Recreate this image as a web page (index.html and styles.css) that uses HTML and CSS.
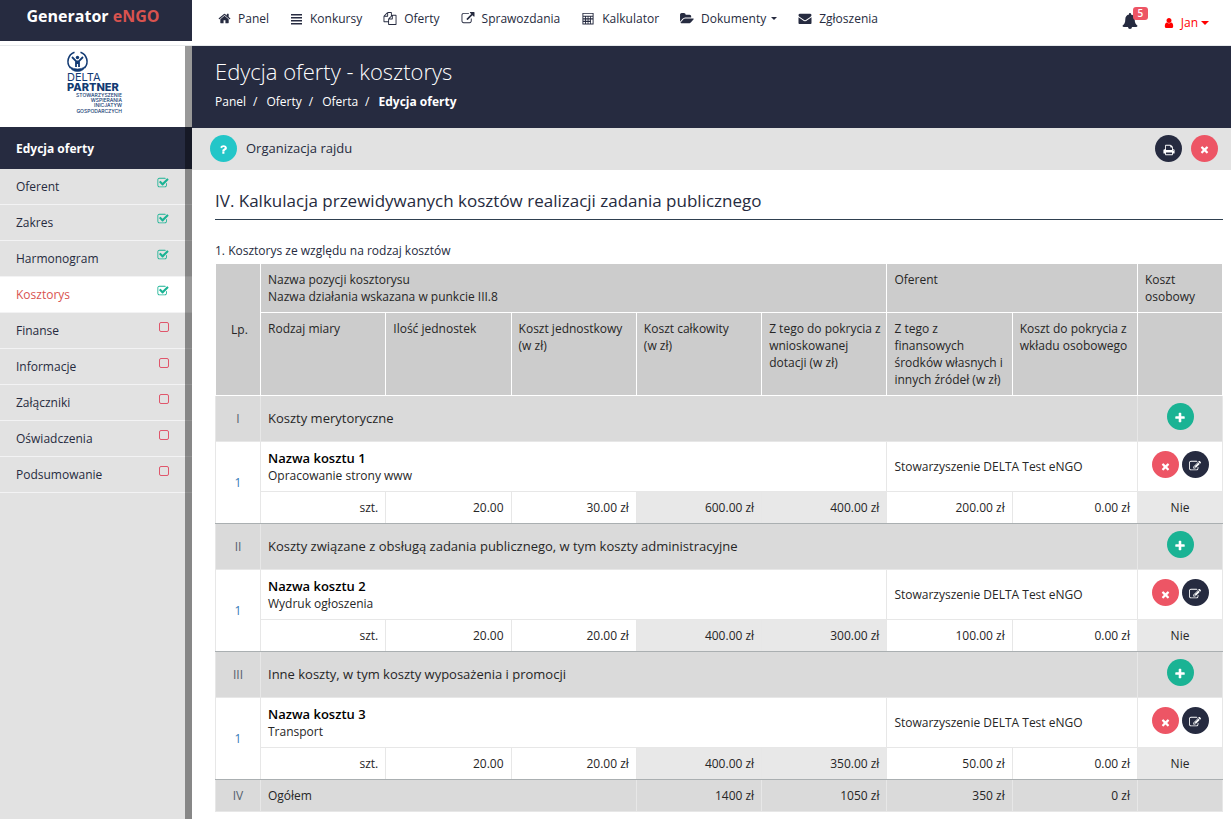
FILE: index.html
```html
<!DOCTYPE html>
<html lang="pl">
<head>
  <meta charset="UTF-8">
  <meta name="viewport" content="width=device-width, initial-scale=1.0">
  <title>Generator eNGO - Edycja oferty</title>
  <link rel="stylesheet" href="styles.css">
</head>
<body>
  <!-- icon set -->
  <svg class="sprite" aria-hidden="true">
    <symbol id="i-home" viewBox="0 0 1792 1792"><path d="M1472 992v480q0 26-19 45t-45 19h-384v-384h-256v384h-384q-26 0-45-19t-19-45v-480q0-1 .5-3t.5-3l575-474 575 474q1 2 1 6zm223-69l-62 74q-8 9-21 11h-3q-13 0-21-7l-692-577-692 577q-12 8-24 7-13-2-21-11l-62-74q-8-10-7-23.5t11-21.5l719-599q32-26 76-26t76 26l244 204v-195q0-14 9-23t23-9h192q14 0 23 9t9 23v408l219 182q10 8 11 21.5t-7 23.5z"/></symbol>
    <symbol id="i-list" viewBox="0 0 13 13"><path d="M1 2h11v1.500H1zM1 5h11v1.500H1zM1 8h11v1.500H1zM1 11h11v1.500H1z"/></symbol>
    <symbol id="i-files" viewBox="0 0 1792 1792"><path d="M1696 384q40 0 68 28t28 68v1216q0 40-28 68t-68 28h-960q-40 0-68-28t-28-68v-288h-544q-40 0-68-28t-28-68v-672q0-40 20-88t48-76l408-408q28-28 76-48t88-20h416q40 0 68 28t28 68v328q68-40 128-40h416zm-544 213l-299 299h299v-299zm-640-384l-299 299h299v-299zm196 647l316-316v-416h-384v416q0 40-28 68t-68 28h-416v640h512v-256q0-40 20-88t48-76zm956 804v-1152h-384v416q0 40-28 68t-68 28h-416v640h896z"/></symbol>
    <symbol id="i-external" viewBox="0 0 1792 1792"><path d="M1408 928v320q0 119-84.500 203.500t-203.500 84.500h-832q-119 0-203.500-84.500t-84.500-203.500v-832q0-119 84.500-203.500t203.500-84.500h704q14 0 23 9t9 23v64q0 14-9 23t-23 9h-704q-66 0-113 47t-47 113v832q0 66 47 113t113 47h832q66 0 113-47t47-113v-320q0-14 9-23t23-9h64q14 0 23 9t9 23zm384-864v512q0 26-19 45t-45 19-45-19l-176-176-652 652q-10 10-23 10t-23-10l-114-114q-10-10-10-23t10-23l652-652-176-176q-19-19-19-45t19-45 45-19h512q26 0 45 19t19 45z"/></symbol>
    <symbol id="i-calc" viewBox="0 0 14 14"><path fill-rule="evenodd" d="M1 1h12v12.500H1zM2 2v2h10V2zM2 5.200v1.500h1.800V5.200zM4.800 5.200v1.500h1.800V5.200zM7.500 5.200v1.500h1.800V5.200zM10.200 5.200v1.500H12V5.200zM2 8v1.500h1.800V8zM4.800 8v1.500h1.800V8zM7.500 8v1.500h1.800V8zM10.200 8v4.500H12V8zM2 10.800v1.600h1.800v-1.600zM4.800 10.800v1.600h1.800v-1.600zM7.500 10.800v1.600h1.800v-1.600z"/></symbol>
    <symbol id="i-folder" viewBox="0 0 1920 1792"><path d="M1879 952q0 31-31 66l-336 396q-43 51-120.500 86.500t-143.500 35.500h-1088q-34 0-60.500-13t-26.500-43q0-31 31-66l336-396q43-51 120.500-86.500t143.500-35.500h1088q34 0 60.500 13t26.500 43zm-343-344v160h-832q-94 0-197 47.500t-164 119.500l-337 396-5 6q0-4-.5-12.500t-.5-12.500v-960q0-92 66-158t158-66h320q92 0 158 66t66 158v32h544q92 0 158 66t66 158z"/></symbol>
    <symbol id="i-mail" viewBox="0 0 1792 1792"><path d="M1792 710v794q0 66-47 113t-113 47h-1472q-66 0-113-47t-47-113v-794q44 49 101 87 362 246 497 345 57 42 92.500 65.500t94.500 48 110 24.500h2q51 0 110-24.500t94.500-48 92.500-65.500q170-123 498-345 57-39 100-87zm0-294q0 79-49 151t-122 123q-376 261-468 325-10 7-42.500 31t-54 38.500-52 32.500-57.500 27-50 9h-2q-23 0-50-9t-57.500-27-52-32.500-54-38.500-42.500-31q-91-64-262-182.500t-205-142.500q-62-42-117-115.500t-55-136.500q0-78 41.500-130t118.500-52h1472q65 0 112.500 47t47.500 113z"/></symbol>
    <symbol id="i-bell" viewBox="0 0 16 16"><path d="M8 0c.6 0 1 .4 1 1v.6c2.400.5 3.700 2.300 3.700 4.700 0 3.500.9 5 2.800 6.500 0 .7-.5 1.200-1.200 1.200H10a2 2 0 0 1-4 0H1.700C1 14 .5 13.500.5 12.800 2.400 11.300 3.300 9.800 3.300 6.300 3.300 3.900 4.600 2.100 7 1.600V1c0-.6.4-1 1-1z"/></symbol>
    <symbol id="i-user" viewBox="192 128 1408 1536"><path d="M1536 1399q0 109-62.500 187t-150.500 78h-854q-88 0-150.500-78t-62.500-187q0-85 8.500-160.500t31.500-152 58.500-131 94-89 134.500-34.500q131 128 313 128t313-128q76 0 134.500 34.500t94 89 58.500 131 31.500 152 8.500 160.500zm-256-887q0 159-112.500 271.500t-271.500 112.500-271.500-112.500-112.500-271.500 112.500-271.500 271.500-112.500 271.500 112.500 112.500 271.500z"/></symbol>
    <symbol id="i-question" viewBox="0 0 12 12"><path d="M4.700 8.300h2.300v2.300H4.700zM2.400 3.600C3.100 2.200 4.300 1.400 6 1.400c2 0 3.700 1.300 3.700 3 0 1.300-.7 1.900-1.700 2.500-.6.400-.9.600-.9.900H4.700c0-1.400.6-1.900 1.700-2.500.7-.4 1-.6 1-1.100s-.6-.9-1.300-.9c-.8 0-1.200.4-1.900 1.300z"/></symbol>
    <symbol id="i-print" viewBox="0 0 1792 1792"><path d="M448 1536h896v-256h-896v256zm0-640h896v-384h-160q-40 0-68-28t-28-68v-160h-640v640zm1152 64q0-26-19-45t-45-19-45 19-19 45 19 45 45 19 45-19 19-45zm128 0v416q0 13-9.500 22.500t-22.500 9.500h-224v160q0 40-28 68t-68 28h-960q-40 0-68-28t-28-68v-160h-224q-13 0-22.500-9.500t-9.500-22.500v-416q0-79 56.500-135.500t135.500-56.500h64v-544q0-40 28-68t68-28h672q40 0 88 20t76 48l152 152q28 28 48 76t20 88v256h64q79 0 135.500 56.500t56.500 135.500z"/></symbol>
    <symbol id="i-times" viewBox="0 0 1792 1792"><path d="M1490 1322q0 40-28 68l-136 136q-28 28-68 28t-68-28l-294-294-294 294q-28 28-68 28t-68-28l-136-136q-28-28-28-68t28-68l294-294-294-294q-28-28-28-68t28-68l136-136q28-28 68-28t68 28l294 294 294-294q28-28 68-28t68 28l136 136q28 28 28 68t-28 68l-294 294 294 294q28 28 28 68z"/></symbol>
    <symbol id="i-plus" viewBox="0 0 1792 1792"><path d="M1600 736v192q0 40-28 68t-68 28h-416v416q0 40-28 68t-68 28h-192q-40 0-68-28t-28-68v-416h-416q-40 0-68-28t-28-68v-192q0-40 28-68t68-28h416v-416q0-40 28-68t68-28h192q40 0 68 28t28 68v416h416q40 0 68 28t28 68z"/></symbol>
    <symbol id="i-edit" viewBox="0 0 1792 1792"><path d="M888 1184l116-116-152-152-116 116v56h96v96h56zm440-720q-16-16-33 1l-350 350q-17 17-1 33t33-1l350-350q17-17 1-33zm80 594v190q0 119-84.500 203.500t-203.500 84.500h-832q-119 0-203.500-84.500t-84.500-203.500v-832q0-119 84.500-203.500t203.500-84.500h832q63 0 117 25 15 7 18 23 3 17-9 29l-49 49q-14 14-32 8-23-6-45-6h-832q-66 0-113 47t-47 113v832q0 66 47 113t113 47h832q66 0 113-47t47-113v-126q0-13 9-22l64-64q15-15 35-7t20 29zm-96-738l288 288-672 672h-288v-288zm444 132l-92 92-288-288 92-92q28-28 68-28t68 28l152 152q28 28 28 68t-28 68z"/></symbol>
    <symbol id="i-done" viewBox="0 0 1792 1792"><path d="M1472 930v318q0 119-84.500 203.500t-203.500 84.500h-832q-119 0-203.500-84.500t-84.500-203.500v-832q0-119 84.500-203.500t203.500-84.500h832q63 0 117 25 15 7 18 23 3 17-9 29l-49 49q-10 10-23 10-3 0-9-2-23-6-45-6h-832q-66 0-113 47t-47 113v832q0 66 47 113t113 47h832q66 0 113-47t47-113v-254q0-13 9-22l64-64q10-10 23-10 6 0 12 3 20 8 20 29zm231-489l-814 814q-24 24-57 24t-57-24l-430-430q-24-24-24-57t24-57l110-110q24-24 57-24t57 24l263 263 647-647q24-24 57-24t57 24l110 110q24 24 24 57t-24 57z"/></symbol>
    <symbol id="i-todo" viewBox="0 0 12 12"><rect x="2.500" y="1.500" width="9" height="9" rx="1.500" fill="none" stroke="currentColor"/></symbol>
    <symbol id="i-caret" viewBox="0 0 8 4"><path d="M0 0h8L4 4z"/></symbol>
  </svg>

  <header class="top">
    <a href="#" class="brand">Generator <span>eNGO</span></a>
    <nav class="menu">
      <a href="#"><svg><use href="#i-home"/></svg>Panel</a>
      <a href="#"><svg><use href="#i-list"/></svg>Konkursy</a>
      <a href="#"><svg class="wide"><use href="#i-files"/></svg>Oferty</a>
      <a href="#"><svg class="wide"><use href="#i-external"/></svg>Sprawozdania</a>
      <a href="#"><svg class="wide"><use href="#i-calc"/></svg>Kalkulator</a>
      <a href="#"><svg class="wide"><use href="#i-folder"/></svg>Dokumenty<svg class="caret"><use href="#i-caret"/></svg></a>
      <a href="#"><svg class="wide"><use href="#i-mail"/></svg>Zgłoszenia</a>
    </nav>
    <div class="account">
      <a href="#" class="bell" aria-label="Powiadomienia"><svg><use href="#i-bell"/></svg><span class="badge">5</span></a>
      <a href="#" class="user"><svg><use href="#i-user"/></svg>Jan<svg class="caret"><use href="#i-caret"/></svg></a>
    </div>
  </header>

  <div class="page">
    <aside class="sidebar">
      <div class="org">
        <svg class="org-logo" viewBox="0 0 76 74" role="img" aria-label="Delta Partner">
          <g fill="none" stroke="#123a73">
            <path d="M17.500 6.200A9.800 9.800 0 0 0 13.500 22M23.500 6.200A9.800 9.800 0 0 1 27.500 22" stroke-width="1.600"/>
            <path d="M12.500 20.500q8 5 16 0-2.500 5-8 5t-8-5z" fill="#123a73" stroke-width=".6"/>
            <path d="M15 11l4 4v6M26 11l-4 4v6M19 15.500h3M20.500 15v3" stroke-width="1.800"/>
          </g>
          <circle cx="20.500" cy="11.500" r="1.700" fill="#123a73"/>
          <text class="logo-name"><tspan x="10" y="35">DELTA</tspan><tspan x="10" y="45" class="logo-bold">PARTNER</tspan></text>
          <text class="logo-small"><tspan x="65" y="51">STOWARZYSZENIE</tspan><tspan x="65" y="56">WSPIERANIA</tspan><tspan x="65" y="61">INICJATYW</tspan><tspan x="65" y="67">GOSPODARCZYCH</tspan></text>
        </svg>
      </div>
      <h2 class="side-title">Edycja oferty</h2>
      <nav class="steps">
        <a href="#">Oferent<svg class="done"><use href="#i-done"/></svg></a>
        <a href="#">Zakres<svg class="done"><use href="#i-done"/></svg></a>
        <a href="#">Harmonogram<svg class="done"><use href="#i-done"/></svg></a>
        <a href="#" class="active">Kosztorys<svg class="done"><use href="#i-done"/></svg></a>
        <a href="#">Finanse<svg class="todo"><use href="#i-todo"/></svg></a>
        <a href="#">Informacje<svg class="todo"><use href="#i-todo"/></svg></a>
        <a href="#">Załączniki<svg class="todo"><use href="#i-todo"/></svg></a>
        <a href="#">Oświadczenia<svg class="todo"><use href="#i-todo"/></svg></a>
        <a href="#">Podsumowanie<svg class="todo"><use href="#i-todo"/></svg></a>
      </nav>
    </aside>

    <main class="main">
      <div class="heading">
        <h1>Edycja oferty - kosztorys</h1>
        <ol class="breadcrumb">
          <li><a href="#">Panel</a></li>
          <li><a href="#">Oferty</a></li>
          <li><a href="#">Oferta</a></li>
          <li><strong>Edycja oferty</strong></li>
        </ol>
      </div>

      <div class="toolbar">
        <button class="circle info" aria-label="Pomoc"><svg><use href="#i-question"/></svg></button>
        <span class="offer-name">Organizacja rajdu</span>
        <button class="circle dark" aria-label="Drukuj"><svg><use href="#i-print"/></svg></button>
        <button class="circle danger" aria-label="Zamknij"><svg><use href="#i-times"/></svg></button>
      </div>

      <section class="content">
        <h2>IV. Kalkulacja przewidywanych kosztów realizacji zadania publicznego</h2>
        <table class="costs">
          <caption>1. Kosztorys ze względu na rodzaj kosztów</caption>
          <colgroup>
            <col class="col-no"><col span="7"><col class="col-act">
          </colgroup>
          <thead>
            <tr>
              <th rowspan="2" class="no">Lp.</th>
              <th colspan="5">Nazwa pozycji kosztorysu<br>Nazwa działania wskazana w punkcie III.8</th>
              <th colspan="2">Oferent</th>
              <th>Koszt osobowy</th>
            </tr>
            <tr>
              <th>Rodzaj miary</th>
              <th>Ilość jednostek</th>
              <th>Koszt jednostkowy (w&nbsp;zł)</th>
              <th>Koszt całkowity (w&nbsp;zł)</th>
              <th>Z tego do pokrycia z wnioskowanej dotacji (w&nbsp;zł)</th>
              <th>Z tego z<br>finansowych środków własnych i innych źródeł (w&nbsp;zł)</th>
              <th>Koszt do pokrycia z wkładu osobowego</th>
              <th></th>
            </tr>
          </thead>
          <tbody>
            <tr class="group">
              <td class="no">I</td>
              <td colspan="7">Koszty merytoryczne</td>
              <td><div class="actions"><button class="circle add" aria-label="Dodaj"><svg><use href="#i-plus"/></svg></button></div></td>
            </tr>
            <tr class="item">
              <td rowspan="2" class="no last"><a href="#">1</a></td>
              <td colspan="5"><strong>Nazwa kosztu 1</strong>Opracowanie strony www</td>
              <td colspan="2">Stowarzyszenie DELTA Test eNGO</td>
              <td><div class="actions"><button class="circle danger" aria-label="Usuń"><svg><use href="#i-times"/></svg></button><button class="circle dark" aria-label="Edytuj"><svg><use href="#i-edit"/></svg></button></div></td>
            </tr>
            <tr class="values">
              <td>szt.</td><td>20.00</td><td>30.00 zł</td><td class="calc">600.00 zł</td><td class="calc">400.00 zł</td><td>200.00 zł</td><td>0.00 zł</td><td class="calc personal">Nie</td>
            </tr>
            <tr class="group">
              <td class="no">II</td>
              <td colspan="7">Koszty związane z obsługą zadania publicznego, w tym koszty administracyjne</td>
              <td><div class="actions"><button class="circle add" aria-label="Dodaj"><svg><use href="#i-plus"/></svg></button></div></td>
            </tr>
            <tr class="item">
              <td rowspan="2" class="no last"><a href="#">1</a></td>
              <td colspan="5"><strong>Nazwa kosztu 2</strong>Wydruk ogłoszenia</td>
              <td colspan="2">Stowarzyszenie DELTA Test eNGO</td>
              <td><div class="actions"><button class="circle danger" aria-label="Usuń"><svg><use href="#i-times"/></svg></button><button class="circle dark" aria-label="Edytuj"><svg><use href="#i-edit"/></svg></button></div></td>
            </tr>
            <tr class="values">
              <td>szt.</td><td>20.00</td><td>20.00 zł</td><td class="calc">400.00 zł</td><td class="calc">300.00 zł</td><td>100.00 zł</td><td>0.00 zł</td><td class="calc personal">Nie</td>
            </tr>
            <tr class="group">
              <td class="no">III</td>
              <td colspan="7">Inne koszty, w tym koszty wyposażenia i promocji</td>
              <td><div class="actions"><button class="circle add" aria-label="Dodaj"><svg><use href="#i-plus"/></svg></button></div></td>
            </tr>
            <tr class="item">
              <td rowspan="2" class="no last"><a href="#">1</a></td>
              <td colspan="5"><strong>Nazwa kosztu 3</strong>Transport</td>
              <td colspan="2">Stowarzyszenie DELTA Test eNGO</td>
              <td><div class="actions"><button class="circle danger" aria-label="Usuń"><svg><use href="#i-times"/></svg></button><button class="circle dark" aria-label="Edytuj"><svg><use href="#i-edit"/></svg></button></div></td>
            </tr>
            <tr class="values">
              <td>szt.</td><td>20.00</td><td>20.00 zł</td><td class="calc">400.00 zł</td><td class="calc">350.00 zł</td><td>50.00 zł</td><td>0.00 zł</td><td class="calc personal">Nie</td>
            </tr>
          </tbody>
          <tfoot>
            <tr class="total">
              <td class="no">IV</td>
              <td colspan="3" class="label">Ogółem</td>
              <td>1400 zł</td><td>1050 zł</td><td>350 zł</td><td>0 zł</td><td></td>
            </tr>
          </tfoot>
        </table>
      </section>
    </main>
  </div>
</body>
</html>
```
FILE: styles.css
```css
* { box-sizing: border-box; }
body {
  margin: 0;
  min-height: 100vh;
  display: flex;
  flex-direction: column;
  background: #fff;
  color: #262b40;
  font-family: "Open Sans", "Noto Sans", sans-serif;
  font-size: 12px;
  line-height: 17px;
}
a { color: inherit; text-decoration: none; }
svg { fill: currentColor; flex: none; }
.sprite { position: absolute; width: 0; height: 0; }

/* top bar */
.top {
  display: flex;
  align-items: flex-start;
  height: 46px;
  border-bottom: 1px solid #e7eaec;
}
.brand {
  width: 192px;
  height: 41px;
  padding: 4px 6px 0 0;
  background: #262b40;
  color: #fff;
  font-size: 16px;
  font-weight: 700;
  line-height: 24px;
  text-align: center;
}
.brand span { color: #d9534f; }
.menu {
  display: flex;
  flex: 1;
  gap: 21px;
  padding: 10px 0 0 26px;
  font-weight: 500;
}
.menu a, .user {
  display: flex;
  align-items: center;
  white-space: nowrap;
}
.menu svg {
  width: 13px;
  height: 13px;
  margin-right: 7px;
}
.menu .wide { width: 14px; }
.menu .caret {
  width: 6px;
  height: 3px;
  margin: 0 0 0 5px;
}
.account {
  display: flex;
  gap: 26px;
  padding: 13px 22px 0 0;
}
.bell { position: relative; }
.bell svg { display: block; width: 16px; height: 16px; }
.badge {
  position: absolute;
  top: -6px;
  right: -10px;
  width: 15px;
  border-radius: 3px;
  background: #ed5565;
  color: #fff;
  font-size: 10px;
  font-weight: 600;
  line-height: 13px;
  text-align: center;
}
.user { color: #f00; height: 19px; }
.user svg { width: 10px; height: 10px; margin-right: 7px; }
.user .caret { width: 8px; height: 4px; margin: 0 0 0 3px; }

.page { display: flex; flex: 1; }

/* sidebar */
.sidebar {
  position: relative;
  flex: none;
  width: 192px;
  background: #e2e2e2;
}
.sidebar::after {
  content: "";
  position: absolute;
  top: 0;
  right: 0;
  bottom: 0;
  width: 7px;
  background: rgba(0, 0, 0, 0.4);
}
.org { height: 81px; padding-left: 57px; background: #fff; }
.org-logo { display: block; width: 76px; height: 74px; fill: #123a73; }
.logo-name { font: 400 11px Inter, sans-serif; }
.logo-bold { font-weight: 800; }
.logo-small { font: 500 5px Inter, sans-serif; text-anchor: end; }
.side-title {
  margin: 0;
  padding: 1px 16px 0;
  background: #262b40;
  color: #fff;
  font-size: 12px;
  font-weight: 700;
  line-height: 41px;
}
.steps a {
  display: flex;
  justify-content: space-between;
  align-items: center;
  height: 36px;
  padding: 0 23px 0 16px;
  border-bottom: 1px solid #f3f3f4;
  font-weight: 500;
}
.steps svg { width: 12px; height: 12px; margin-bottom: 7px; }
.steps .active { background: #fff; color: #d9534f; }
.done, .steps .active .done { color: #1ab394; }
.todo { color: #e0566b; }

/* page heading */
.main { flex: 1; min-width: 0; }
.heading {
  height: 82px;
  padding: 12px 23px 0;
  background: #262b40;
  color: #fff;
}
.heading h1 {
  margin: 0 0 8px;
  font-size: 22px;
  font-weight: 300;
  line-height: 27px;
}
.breadcrumb {
  display: flex;
  margin: 0;
  padding: 0;
  list-style: none;
  font-weight: 500;
}
.breadcrumb li + li::before { content: "/"; padding: 0 9px 0 7px; }

.toolbar {
  display: flex;
  align-items: center;
  gap: 9px;
  height: 42px;
  padding: 0 13px 2px 18px;
  background: #e2e2e2;
}
.offer-name { flex: 1; font-size: 13px; }
.circle {
  display: flex;
  align-items: center;
  justify-content: center;
  width: 27px;
  height: 27px;
  padding: 3px 0 0;
  border: 0;
  border-radius: 50%;
  color: #fff;
  cursor: pointer;
}
.circle svg { width: 12px; height: 12px; }
.info svg, .danger svg { width: 11px; height: 11px; }
.info { background: #23c6c8; }
.dark { background: #262b40; }
.danger { background: #ed5565; }
.add { background: #1ab394; }

/* cost table */
.content { padding: 20px 8px 8px 23px; }
.content h2 {
  margin: 0 0 22px;
  padding-bottom: 7px;
  border-bottom: 1px solid #2f4050;
  font-size: 17px;
  font-weight: 400;
  line-height: 22px;
}
.costs {
  width: 100%;
  border-collapse: collapse;
  table-layout: fixed;
  color: #262626;
}
.costs caption {
  padding-bottom: 4px;
  color: #262b40;
  font-weight: 500;
  text-align: left;
}
.col-no { width: 45px; }
.col-act { width: 85px; }
th, td {
  padding: 7px;
  border: 1px solid #e7e7e7;
  text-align: left;
}
th {
  padding-right: 4px;
  border-color: #fff;
  background: #ccc;
  font-weight: 400;
  vertical-align: top;
}
th.no { vertical-align: middle; }
.costs .no { text-align: center; }
.group td { height: 46px; padding: 0 7px; background: #dadada; font-size: 13px; }
.group .no, .total .no { color: #55606c; font-size: 12px; }
.item td { height: 50px; }
.item strong {
  display: block;
  color: #000;
  font-size: 13px;
  font-weight: 600;
  line-height: 18px;
}
.no a { color: #337ab7; }
.values td { text-align: right; }
.values td, .costs .last { border-bottom-color: #aaafb1; }
.values .calc { background: #e8e8e8; }
.values .personal { text-align: center; }
.total td { background: #dadada; text-align: right; }
.total .label { text-align: left; }
.actions {
  display: flex;
  justify-content: center;
  gap: 3px;
  margin-bottom: 4px;
}
```
